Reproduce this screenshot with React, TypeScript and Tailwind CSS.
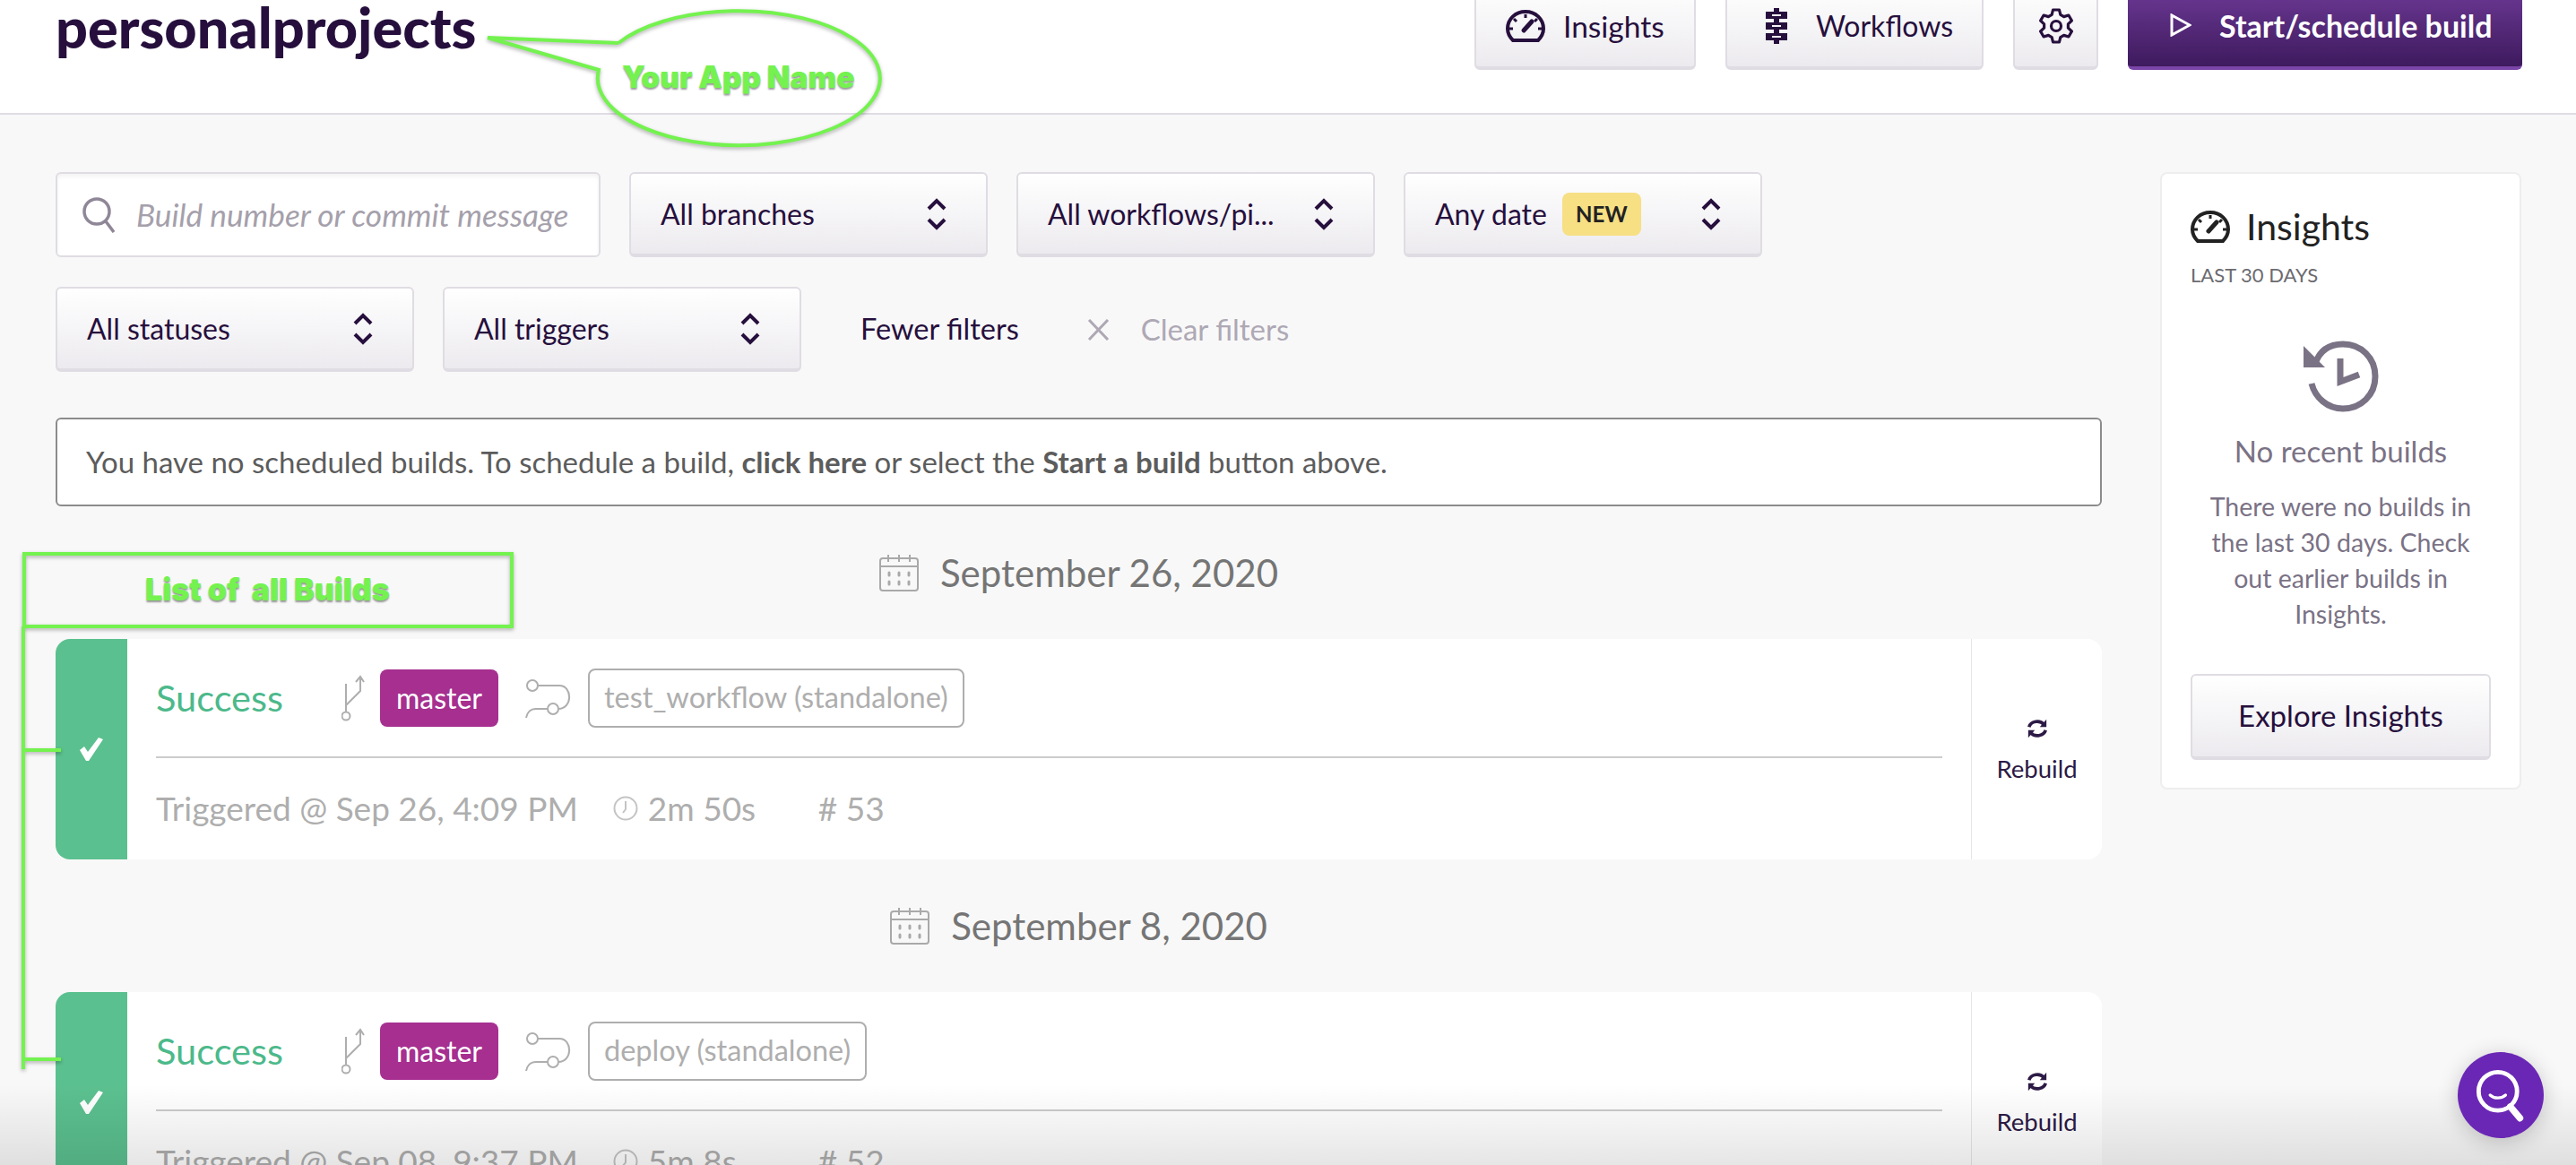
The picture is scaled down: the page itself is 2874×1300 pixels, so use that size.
const btn =
  "flex items-center rounded-[6px] border-2 border-b-[4px] border-[#e0dce3] bg-gradient-to-b from-white to-[#ecEAee] text-[32px] text-[#260f3d]";

function Gauge({ className }: { className: string }) {
  return (
    <svg viewBox="0 0 44 36" className={className} fill="none" stroke="currentColor" strokeWidth="4">
      <path d="M8 34 H36 C40 30 42 26 42 21 C42 10 33 2 22 2 C11 2 2 10 2 21 C2 26 4 30 8 34 Z" />
      <path d="M20 23 L29 13" strokeWidth="5" strokeLinecap="round" />
      <path d="M22 5 V9 M9 10 L12 13 M35 10 L32 13 M4 21 H8 M40 21 H36" strokeWidth="3" />
    </svg>
  );
}

function Gear() {
  return (
    <svg viewBox="0 0 40 40" className="h-[40px] w-[40px]" fill="none" stroke="#260f3d" strokeWidth="3.2" strokeLinejoin="round">
      <path d="M16.5 2 H23.5 L24.8 7.4 L28.6 9.6 L33.9 8 L37.4 14 L33.4 17.8 V22.2 L37.4 26 L33.9 32 L28.6 30.4 L24.8 32.6 L23.5 38 H16.5 L15.2 32.6 L11.4 30.4 L6.1 32 L2.6 26 L6.6 22.2 V17.8 L2.6 14 L6.1 8 L11.4 9.6 L15.2 7.4 Z" />
      <circle cx="20" cy="20" r="5.5" />
    </svg>
  );
}

function Chevrons({ className = "" }: { className?: string }) {
  return (
    <svg viewBox="0 0 22 36" className={`h-[36px] w-[22px] shrink-0 text-[#260f3d] ${className}`} fill="none" stroke="currentColor" strokeWidth="4">
      <path d="M2 12 L11 3 L20 12 M2 24 L11 33 L20 24" />
    </svg>
  );
}

function BranchIcon() {
  return (
    <svg viewBox="0 0 26 52" className="h-[52px] w-[26px] shrink-0" fill="none" stroke="#aeaeae" strokeWidth="2">
      <circle cx="5" cy="46" r="4.5" />
      <path d="M5 41 V10 M5 34 L21 18 V2 M16 8 L21 2 L25 8" />
    </svg>
  );
}

function RouteIcon() {
  return (
    <svg viewBox="0 0 52 44" className="h-[44px] w-[52px] shrink-0" fill="none" stroke="#aeaeae" strokeWidth="2">
      <circle cx="8" cy="8" r="6" />
      <circle cx="31" cy="34" r="6" />
      <path d="M14 8 H38 C53 8 53 34 37 34 M25 34 H12 C6 34 2 38 1 44" />
    </svg>
  );
}

function Calendar() {
  return (
    <svg viewBox="0 0 44 42" className="h-[42px] w-[44px] shrink-0" fill="none" stroke="#a9a9a9" strokeWidth="2">
      <rect x="1" y="5" width="42" height="36" rx="3" />
      <path d="M1 14 H43 M10 1 V9 M22 1 V9 M34 1 V9" />
      <path d="M11 21 V24 M22 21 V24 M33 21 V24 M11 31 V34 M22 31 V34 M33 31 V34" strokeWidth="3" strokeLinecap="round" />
    </svg>
  );
}

function Rebuild() {
  return (
    <svg viewBox="0 0 26 24" className="h-[24px] w-[24px]" fill="none" stroke="#2c1a45" strokeWidth="4">
      <path d="M3 10 C5 3 16 1 21 7" />
      <path d="M23 14 C21 21 10 23 5 17" />
      <path d="M24 1 V10 H16 Z M2 23 V14 H10 Z" fill="#2c1a45" stroke="none" />
    </svg>
  );
}

function FilterSelect({ label, badge }: { label: string; badge?: boolean }) {
  return (
    <div className={`${btn} h-[95px] w-[400px] pl-[33px] pr-[44px] text-[32.5px]`}>
      <span className="whitespace-nowrap">{label}</span>
      {badge && (
        <span className="ml-[17px] flex h-[48px] w-[88px] items-center justify-center rounded-[8px] bg-[#f7df84] text-[24px] font-bold text-[#222222]">
          NEW
        </span>
      )}
      <Chevrons className="ml-auto" />
    </div>
  );
}

function DateHeading({ children }: { children: string }) {
  return (
    <div className="flex h-[148px] items-center justify-center gap-[24px] text-[42px] text-[#757575]">
      <Calendar />
      <span>{children}</span>
    </div>
  );
}

function BuildCard({ workflow, triggered, duration, num }: { workflow: string; triggered: string; duration: string; num: string }) {
  return (
    <div className="flex h-[246px] overflow-hidden rounded-[16px] bg-white">
      <div className="flex w-[80px] shrink-0 items-center justify-center bg-[#5bc08f]">
        <svg viewBox="0 0 28 28" className="h-[28px] w-[28px]" fill="white">
          <path d="M1 15 L6 11 L10 17 L22 1 L27 3 L11 27 H8 Z" />
        </svg>
      </div>
      <div className="min-w-0 flex-1 pl-[32px] pr-[32px]">
        <div className="flex h-[133px] items-center border-b-2 border-[#cccccc]">
          <span className="w-[207px] text-[41.5px] text-[#4cb98a]">Success</span>
          <BranchIcon />
          <span className="ml-[17px] flex h-[64px] w-[132px] items-center justify-center rounded-[8px] bg-[#a62f90] text-[32px] text-white">
            master
          </span>
          <span className="ml-[30px]"><RouteIcon /></span>
          <span className="ml-[18px] flex h-[66px] items-center rounded-[8px] border-2 border-[#aeaeae] px-[16px] text-[32.5px] text-[#aeaeae]">
            {workflow}
          </span>
        </div>
        <div className="flex h-[111px] items-center text-[37px] text-[#aeaeae]">
          <span className="whitespace-nowrap">{triggered}</span>
          <svg viewBox="0 0 28 28" className="ml-[39px] mr-[11px] h-[28px] w-[28px]" fill="none" stroke="#c4c4c4" strokeWidth="2">
            <circle cx="14" cy="14" r="12.5" />
            <path d="M14 6 V15 L11 19" />
          </svg>
          <span className="w-[190px] whitespace-nowrap">{duration}</span>
          <span className="whitespace-nowrap">{num}</span>
        </div>
      </div>
      <div className="flex w-[146px] shrink-0 flex-col items-center justify-center gap-[12px] border-l border-[#e6e6e6] pt-[8px] text-[27.5px] text-[#2c1a45]">
        <Rebuild />
        <span>Rebuild</span>
      </div>
    </div>
  );
}

export default function App() {
  return (
    <div className="relative h-[1300px] overflow-hidden bg-[#f8f8f8] font-[family-name:Lato,sans-serif]">
      <header className="flex h-[128px] border-b-2 border-[#e0dce3] bg-white pl-[62px] pr-[60px]">
        <h1 className="text-[63px] leading-[60px] font-black text-[#260f3d]">personalprojects</h1>
        <div className="ml-auto flex h-[96px] -translate-y-[18px] gap-[33px]">
          <div className={`${btn} w-[247px] gap-[20px] pl-[33px] text-[33.5px]`}>
            <Gauge className="h-[36px] w-[44px]" />
            <span>Insights</span>
          </div>
          <div className={`${btn} w-[288px] gap-[30px] pl-[41px]`}>
            <svg viewBox="0 0 28 40" className="h-[40px] w-[28px]" fill="#260f3d">
              <path d="M11 0 H17 V40 H11 Z" />
              <path d="M2 4 H26 V12 H2 Z M2 16 H26 V24 H2 Z M2 28 H26 V36 H2 Z" />
              <path d="M9 7 H19 V9 H9 Z M9 19 H19 V21 H9 Z M9 31 H19 V33 H9 Z" fill="#f5f3f6" />
            </svg>
            <span>Workflows</span>
          </div>
          <div className={`${btn} w-[95px] justify-center`}>
            <Gear />
          </div>
          <div className="flex w-[440px] items-center gap-[31px] rounded-[6px] border-b-[4px] border-[#7a45a8] bg-gradient-to-b from-[#6f3b98] to-[#3e1a5e] pl-[47px] text-[34px] font-bold text-white">
            <svg viewBox="0 0 24 26" className="h-[26px] w-[24px]" fill="none" stroke="white" strokeWidth="3">
              <path d="M2 2 L22 13 L2 24 Z" />
            </svg>
            <span className="whitespace-nowrap">Start/schedule build</span>
          </div>
        </div>
      </header>

      <main className="flex gap-[65px] pl-[62px] pr-[60px] pt-[64px]">
        <div className="w-[2283px] shrink-0">
          <div className="flex gap-[32px]">
            <div className="flex h-[95px] w-[608px] items-center rounded-[6px] border-2 border-[#e0dce3] bg-white pl-[28px] shadow-[inset_0_3px_4px_rgba(0,0,0,0.05)]">
              <svg viewBox="0 0 38 40" className="h-[40px] w-[38px] shrink-0" fill="none" stroke="#8f8797" strokeWidth="3.5">
                <circle cx="16" cy="16" r="14" />
                <path d="M26 27 L35 39" />
              </svg>
              <span className="ml-[22px] whitespace-nowrap text-[35.2px] text-[#a5a0ab] italic">Build number or commit message</span>
            </div>
            <FilterSelect label="All branches" />
            <FilterSelect label="All workflows/pi..." />
            <FilterSelect label="Any date" badge />
          </div>
          <div className="mt-[33px] flex items-center gap-[32px]">
            <FilterSelect label="All statuses" />
            <FilterSelect label="All triggers" />
            <span className="ml-[34px] text-[32.5px] text-[#260f3d]">Fewer filters</span>
            <span className="ml-[44px] flex items-center gap-[35px] text-[33px] text-[#aea8b5]">
              <svg viewBox="0 0 25 24" className="h-[24px] w-[25px]" fill="none" stroke="#aea8b5" strokeWidth="3">
                <path d="M2 1 L23 23 M23 1 L2 23" />
              </svg>
              Clear filters
            </span>
          </div>

          <div className="mt-[51px] flex h-[99px] items-center rounded-[6px] border-2 border-[#8c8c8c] bg-white pl-[32px] text-[33px] text-[#5c5c5c]">
            <span>
              You have no scheduled builds. To schedule a build, <b>click here</b> or select the <b>Start a build</b> button above.
            </span>
          </div>

          <DateHeading>September 26, 2020</DateHeading>
          <BuildCard workflow="test_workflow (standalone)" triggered="Triggered @ Sep 26, 4:09 PM" duration="2m 50s" num="# 53" />
          <DateHeading>September 8, 2020</DateHeading>
          <BuildCard workflow="deploy (standalone)" triggered="Triggered @ Sep 08, 9:37 PM" duration="5m 8s" num="# 52" />
        </div>

        <aside className="flex h-[689px] w-[403px] shrink-0 flex-col rounded-[8px] border-2 border-[#eeeeee] bg-white px-[32px] pt-[28px]">
          <div className="flex items-center gap-[18px] text-[41px] text-[#222222]">
            <Gauge className="h-[36px] w-[44px]" />
            <span>Insights</span>
          </div>
          <div className="mt-[6px] text-[22px] text-[#6b6b70]">LAST 30 DAYS</div>
          <svg viewBox="0 0 84 80" className="mx-auto mt-[57px] h-[80px] w-[84px] shrink-0" fill="none" stroke="#7a7285" strokeWidth="7">
            <path d="M13 26 C18 11 29 4 44 4 C64 4 80 19 80 40 C80 61 64 76 44 76 C27 76 13 64 9 48" />
            <path d="M0 6 L24 30 H0 Z" fill="#7a7285" stroke="none" />
            <path d="M41 20 V46 L62 38" strokeWidth="7" />
          </svg>
          <div className="mt-[19px] text-center text-[33px] text-[#7a7285]">No recent builds</div>
          <p className="mt-[17px] text-center text-[28.5px] leading-[40px] text-[#7a7285]">
            There were no builds in the last 30 days. Check out earlier builds in Insights.
          </p>
          <div className={`${btn} mt-[47px] h-[96px] shrink-0 justify-center text-[33px]`}>Explore Insights</div>
        </aside>
      </main>

      {/* bottom fade */}
      <div className="pointer-events-none absolute inset-x-0 bottom-0 h-[90px] bg-gradient-to-b from-transparent to-black/10" />

      {/* chat bubble */}
      <div className="absolute left-[2742px] top-[1174px] flex h-[96px] w-[96px] items-center justify-center rounded-full bg-[#6a27b5] shadow-[0_4px_24px_rgba(0,0,0,0.2)]">
        <svg viewBox="0 0 56 56" className="h-[60px] w-[60px]" fill="none" stroke="white" strokeWidth="4.5">
          <circle cx="25" cy="24" r="20" />
          <path d="M17 28 C21 32 29 32 33 28" strokeWidth="3" strokeLinecap="round" />
          <path d="M38 40 L48 52" strokeWidth="7" strokeLinecap="round" />
        </svg>
      </div>

      {/* annotations drawn over the screenshot */}
      <svg className="pointer-events-none absolute left-0 top-0" width="1100" height="1300" fill="none" stroke="#74f24f" strokeWidth="4">
        <g className="drop-shadow-[0_2px_2px_rgba(0,0,0,0.3)]">
          <path d="M690 48 L544 42 L668 78 A157.5 75 0 1 0 690 48" />
          <rect x="27" y="618" width="544" height="81" />
          <path d="M26 699 V1193 M26 837 H68 M24 1182 H68" />
        </g>
      </svg>
      <div className="absolute left-[694px] top-[61px] font-[family-name:Inter,sans-serif] text-[33.5px] font-black text-[#74f24f] [text-shadow:0_2px_2px_rgba(0,0,0,0.4)]">
        Your App Name
      </div>
      <div className="absolute left-[162px] top-[632px] font-[family-name:Inter,sans-serif] text-[34px] font-black whitespace-pre text-[#74f24f] [text-shadow:0_2px_2px_rgba(0,0,0,0.4)]">
        List of  all Builds
      </div>
    </div>
  );
}
